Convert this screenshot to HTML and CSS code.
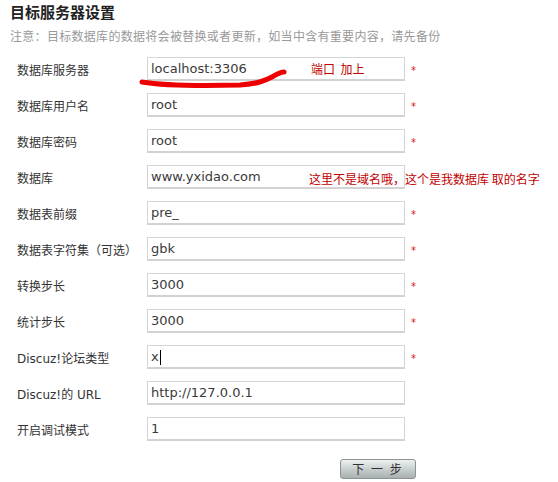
FILE: index.html
```html
<!DOCTYPE html>
<html lang="zh-CN">
<head>
<meta charset="utf-8">
<title>目标服务器设置</title>
<link rel="stylesheet" href="styles.css">
</head>
<body>
<div class="page">
  <h1 class="title">目标服务器设置</h1>
  <p class="note">注意：目标数据库的数据将会被替换或者更新，如当中含有重要内容，请先备份</p>
  <form class="form">
    <label class="label">数据库服务器</label>
    <div class="field"><input class="input" value="localhost:3306"><span class="remark remark-port">端口&nbsp; 加上</span></div>
    <span class="star">*</span>

    <label class="label">数据库用户名</label>
    <div class="field"><input class="input" value="root"></div>
    <span class="star">*</span>

    <label class="label">数据库密码</label>
    <div class="field"><input class="input" value="root"></div>
    <span class="star">*</span>

    <label class="label">数据库</label>
    <div class="field"><input class="input" value="www.yxidao.com"><span class="remark remark-db">这里不是域名哦，这个是我数据库 取的名字</span></div>
    <span class="star"></span>

    <label class="label">数据表前缀</label>
    <div class="field"><input class="input" value="pre_"></div>
    <span class="star">*</span>

    <label class="label">数据表字符集（可选）</label>
    <div class="field"><input class="input" value="gbk"></div>
    <span class="star">*</span>

    <label class="label">转换步长</label>
    <div class="field"><input class="input" value="3000"></div>
    <span class="star">*</span>

    <label class="label">统计步长</label>
    <div class="field"><input class="input" value="3000"></div>
    <span class="star">*</span>

    <label class="label">Discuz!论坛类型</label>
    <div class="field"><input class="input" value="x"><span class="caret"></span></div>
    <span class="star">*</span>

    <label class="label">Discuz!的 URL</label>
    <div class="field"><input class="input" value="http://127.0.0.1"></div>
    <span class="star"></span>

    <label class="label">开启调试模式</label>
    <div class="field"><input class="input" value="1"></div>
    <span class="star"></span>

    <div class="actions"><button type="button" class="btn">下 一 步</button></div>
  </form>
  <svg class="scribble" width="558" height="482" viewBox="0 0 558 482" aria-hidden="true">
    <path d="M142 82 C 160 85, 200 86, 240 85 C 258 84, 266 80, 272 77 C 277 74, 281 72, 284 72" fill="none" stroke="#ee0000" stroke-width="5" stroke-linecap="round"/>
  </svg>
</div>
</body>
</html>
```
FILE: styles.css
```css
html, body {
  margin: 0;
  padding: 0;
  background: #ffffff;
}

.page {
  position: relative;
  width: 558px;
  height: 482px;
  padding: 2px 0 0 10px;
  box-sizing: border-box;
  font-family: "DejaVu Sans", "Noto Sans CJK SC", sans-serif;
  color: #333333;
}

.title {
  margin: 0;
  font-size: 15px;
  line-height: 20px;
  font-weight: bold;
  color: #222222;
  font-family: "Noto Sans CJK SC", sans-serif;
}

.note {
  margin: 4px 0 0;
  font-size: 12px;
  line-height: 20px;
  letter-spacing: 0.3px;
  color: #999999;
  font-family: "Noto Sans CJK SC", sans-serif;
}

.form {
  margin: 11px 0 0 7px;
  display: grid;
  grid-template-columns: 130px 258px 30px;
  grid-auto-rows: 24px;
  row-gap: 12px;
  align-items: center;
}

.label {
  font-size: 12px;
  color: #333333;
  white-space: nowrap;
}

.field {
  position: relative;
  height: 24px;
}

.input {
  display: block;
  box-sizing: border-box;
  width: 258px;
  height: 24px;
  margin: 0;
  padding: 0 3px;
  border: 1px solid #d5d5d5;
  border-bottom: 2px solid #d2d2d2;
  background: #ffffff;
  font-family: "DejaVu Sans", sans-serif;
  font-size: 13px;
  color: #3a3a3a;
  outline: none;
}

.star {
  padding-left: 6px;
  color: #e01010;
  font-size: 10px;
  line-height: 24px;
  position: relative;
  top: 2px;
}

.remark {
  position: absolute;
  top: 0;
  line-height: 24px;
  font-size: 12px;
  color: #c00000;
  white-space: nowrap;
  font-family: "Noto Sans CJK SC", sans-serif;
}

.remark-port {
  left: 164px;
}

.remark-db {
  left: 162px;
  top: 2px;
}

.caret {
  position: absolute;
  left: 13px;
  top: 5px;
  width: 1px;
  height: 15px;
  background: #000000;
}

.actions {
  grid-column: 2 / 4;
  margin-top: 7px;
  padding-left: 193px;
  height: 20px;
}

.btn {
  display: block;
  width: 76px;
  height: 20px;
  padding: 0;
  border: 1px solid #8b9393;
  border-radius: 3px;
  background: linear-gradient(#eef1f1, #c9cfcf 50%, #a8b0b0);
  font-family: "Noto Sans CJK SC", sans-serif;
  font-size: 12px;
  letter-spacing: 2px;
  color: #333333;
  line-height: 18px;
}

.scribble {
  position: absolute;
  left: 0;
  top: 0;
  pointer-events: none;
}
```
